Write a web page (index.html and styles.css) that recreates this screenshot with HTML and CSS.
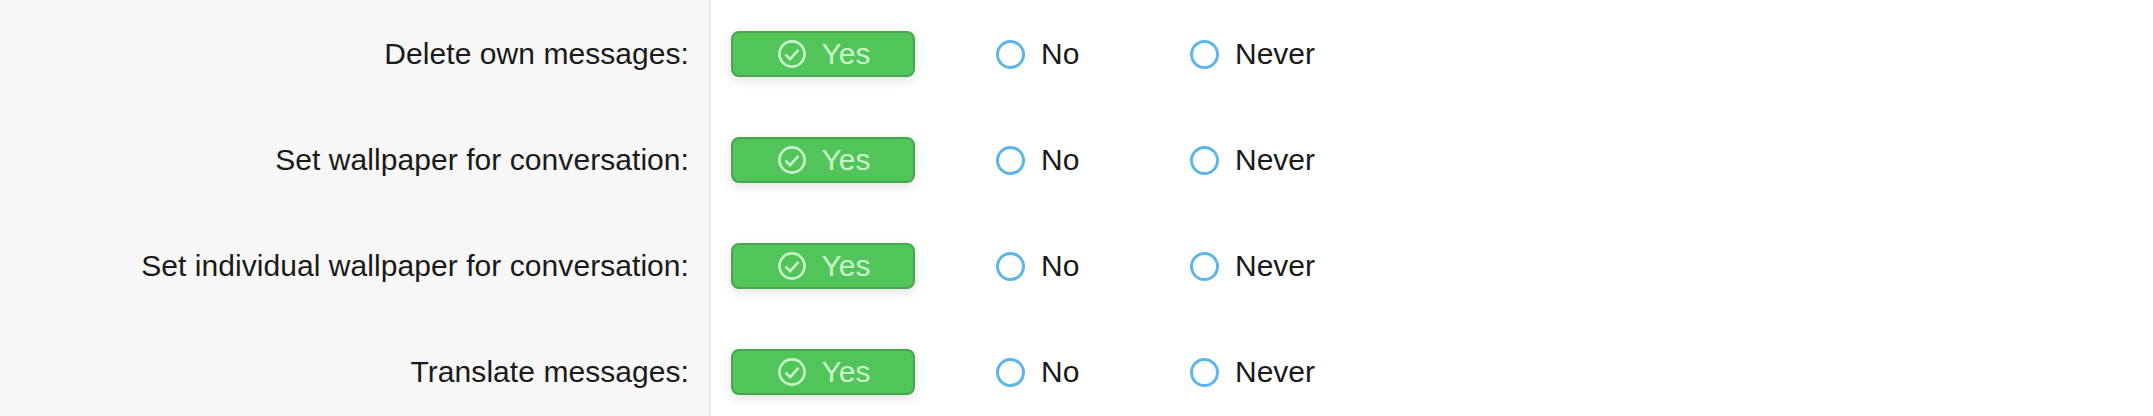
FILE: index.html
```html
<!DOCTYPE html>
<html lang="en">
<head>
    <meta charset="UTF-8">
    <title>Permissions</title>
    <link rel="stylesheet" href="styles.css">
</head>
<body>

<div class="form">
    <div class="row">
        <div class="label">Delete own messages:</div>
        <div class="field">
            <div class="yes-btn">
                <svg class="check" viewBox="0 0 30 30"><circle cx="15" cy="15" r="13.5"/><path d="M8 15.5l5 5 9-10"/></svg>
                <span>Yes</span>
            </div>
            <div class="option option-no"><span class="radio"></span><span>No</span></div>
            <div class="option"><span class="radio"></span><span>Never</span></div>
        </div>
    </div>
    <div class="row">
        <div class="label">Set wallpaper for conversation:</div>
        <div class="field">
            <div class="yes-btn">
                <svg class="check" viewBox="0 0 30 30"><circle cx="15" cy="15" r="13.5"/><path d="M8 15.5l5 5 9-10"/></svg>
                <span>Yes</span>
            </div>
            <div class="option option-no"><span class="radio"></span><span>No</span></div>
            <div class="option"><span class="radio"></span><span>Never</span></div>
        </div>
    </div>
    <div class="row">
        <div class="label">Set individual wallpaper for conversation:</div>
        <div class="field">
            <div class="yes-btn">
                <svg class="check" viewBox="0 0 30 30"><circle cx="15" cy="15" r="13.5"/><path d="M8 15.5l5 5 9-10"/></svg>
                <span>Yes</span>
            </div>
            <div class="option option-no"><span class="radio"></span><span>No</span></div>
            <div class="option"><span class="radio"></span><span>Never</span></div>
        </div>
    </div>
    <div class="row">
        <div class="label">Translate messages:</div>
        <div class="field">
            <div class="yes-btn">
                <svg class="check" viewBox="0 0 30 30"><circle cx="15" cy="15" r="13.5"/><path d="M8 15.5l5 5 9-10"/></svg>
                <span>Yes</span>
            </div>
            <div class="option option-no"><span class="radio"></span><span>No</span></div>
            <div class="option"><span class="radio"></span><span>Never</span></div>
        </div>
    </div>
</div>

</body>
</html>
```

FILE: styles.css
```css
/* Global Styles */
html, body {
    margin: 0;
    padding: 0;
    height: 100%;
    overflow: hidden;
}

body {
    font-family: 'Liberation Sans', Arial, sans-serif;
    font-size: 30px;
    color: #1a1a1a;
    background: #fff;
}

/* Form Layout */
.form {
    display: flex;
    flex-direction: column;
    height: 100%;
}

.row {
    display: flex;
    flex: 0 0 106px;
}

.label {
    box-sizing: border-box;
    width: 711px;
    flex: none;
    padding: 38px 20px 0 0;
    line-height: 32px;
    letter-spacing: 0.06px;
    text-align: right;
    background: #f7f7f7;
    border-right: 2px solid #e8e8e8;
}

.field {
    display: flex;
    align-items: flex-start;
    padding: 31px 0 0 20px;
}

/* Yes Button */
.yes-btn {
    box-sizing: border-box;
    width: 184px;
    height: 46px;
    padding-left: 2px;
    display: flex;
    align-items: center;
    justify-content: center;
    gap: 16px;
    color: #c9f5cc;
    background: #51c559;
    border: 2px solid #48a64f;
    border-radius: 8px;
    box-shadow: 0 3px 12px rgba(0, 0, 0, 0.12);
}

.check {
    width: 28px;
    height: 28px;
    fill: none;
    stroke: #c9f5cc;
    stroke-width: 2.8;
}

/* Radio Options */
.option {
    display: flex;
    align-items: center;
    gap: 16px;
    height: 46px;
}

.option-no {
    width: 194px;
    margin-left: 81px;
}

.radio {
    box-sizing: border-box;
    width: 29px;
    height: 29px;
    border: 3px solid #5db5e8;
    border-radius: 50%;
}
```
